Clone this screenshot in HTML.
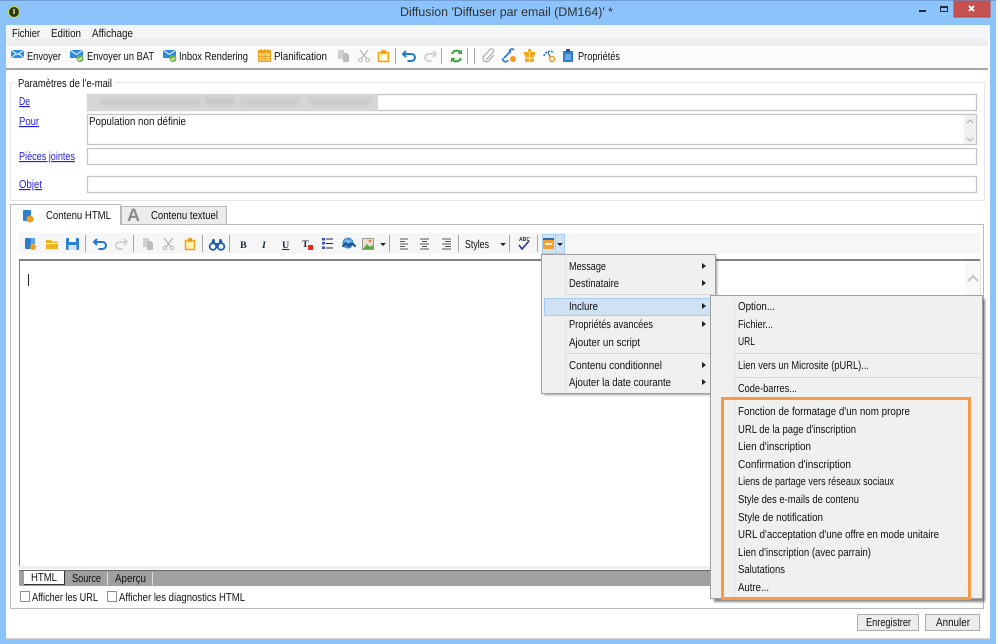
<!DOCTYPE html>
<html lang="fr"><head><meta charset="utf-8"><title>Diffusion</title>
<style>
html,body{margin:0;padding:0;background:#fff;width:1000px;height:644px;overflow:hidden}
svg{display:block}
text{font-family:"Liberation Sans",sans-serif;font-size:11.5px;fill:#111;text-rendering:geometricPrecision}
</style></head><body>
<svg width="1000" height="644" viewBox="0 0 1000 644" xmlns="http://www.w3.org/2000/svg">
<defs>
<filter id="b" x="-5%" y="-50%" width="110%" height="200%" color-interpolation-filters="sRGB"><feGaussianBlur stdDeviation="2"/></filter>
<filter id="s" x="-5%" y="-5%" width="110%" height="110%" color-interpolation-filters="sRGB"><feGaussianBlur stdDeviation="1"/></filter>
<filter id="soft" filterUnits="userSpaceOnUse" x="0" y="0" width="1000" height="644" color-interpolation-filters="sRGB"><feGaussianBlur stdDeviation="0.35"/></filter>
</defs>
<g filter="url(#soft)">
<rect x="0" y="0" width="1000" height="644" fill="#fff"/>
<!-- window -->
<rect x="0" y="0" width="996" height="644" fill="#8cc3fa"/>
<rect x="0" y="0" width="996" height="1" fill="#6f9fd6"/>
<rect x="6" y="25" width="984" height="614" fill="#fff"/>
<rect x="6" y="25" width="984" height="14" fill="#f4f5f7"/>
<rect x="6" y="39" width="982" height="7" fill="#eeeeee"/>
<rect x="6" y="46" width="982" height="22" fill="#fbfbfb"/>
<rect x="6" y="68" width="982" height="2" fill="#a6a6a6"/>
<rect x="6" y="638" width="984" height="1" fill="#d8d8d8"/>
<!-- title -->
<circle cx="14" cy="12" r="5.500" fill="#2f3a1c" stroke="#c8d84a" stroke-width="1"/>
<rect x="13" y="9" width="2" height="5" fill="#b5b56a"/>
<text x="400" y="16" textLength="213" lengthAdjust="spacingAndGlyphs" style="font-size:12.5px;fill:#333">Diffusion 'Diffuser par email (DM164)' *</text>
<rect x="919" y="10" width="7" height="2" fill="#1f2a3a"/>
<rect x="940.500" y="6.500" width="7" height="5" fill="none" stroke="#1f2a3a"/>
<rect x="940" y="6" width="8" height="2" fill="#1f2a3a"/>
<rect x="954" y="1" width="36" height="16" fill="#c75050" stroke="#b04a4a" stroke-width="1"/>
<path d="M969 6l5 5M974 6l-5 5" stroke="#fff" stroke-width="1.800"/>
<!-- menu -->
<text x="12" y="37" textLength="28" lengthAdjust="spacingAndGlyphs">Fichier</text>
<text x="51" y="37" textLength="30" lengthAdjust="spacingAndGlyphs">Edition</text>
<text x="92" y="37" textLength="41" lengthAdjust="spacingAndGlyphs">Affichage</text>
<!-- top toolbar -->
<g>
<rect x="11" y="50" width="13" height="8" fill="#2f8ae0"/><path d="M11 50l6.500 4.500L24 50M11 58l5-4M24 58l-5-4" stroke="#fff" fill="none"/>
<text x="27" y="60" textLength="34" lengthAdjust="spacingAndGlyphs">Envoyer</text>
<rect x="70" y="50" width="13" height="8" fill="#2f8ae0"/><path d="M70 50l6.500 4.500L83 50" stroke="#fff" fill="none"/><circle cx="80" cy="58.500" r="3.500" fill="#6cb33f"/><path d="M78 58.500l1.500 1.500 2.500-2.500" stroke="#fff" fill="none"/>
<text x="87" y="60" textLength="67" lengthAdjust="spacingAndGlyphs">Envoyer un BAT</text>
<rect x="163" y="50" width="13" height="8" fill="#2f8ae0"/><path d="M163 50l6.500 4.500L176 50" stroke="#fff" fill="none"/><circle cx="173" cy="58.500" r="3.500" fill="#6cb33f"/><path d="M171 58.500l1.500 1.500 2.500-2.500" stroke="#fff" fill="none"/>
<text x="179" y="60" textLength="69" lengthAdjust="spacingAndGlyphs">Inbox Rendering</text>
<rect x="258.500" y="51.500" width="12" height="10" fill="#fbd36b" stroke="#eba01e"/><rect x="258" y="50" width="13" height="3" fill="#eba01e"/><path d="M261 49v3M264.500 49v3M268 49v3M262 54v7M265.500 54v7M259 56.500h11M259 59h11" stroke="#eba01e" stroke-width=".8"/>
<text x="274" y="60" textLength="53" lengthAdjust="spacingAndGlyphs">Planification</text>
<path d="M338 50h6v9h-6z" fill="#d0d0d0"/><path d="M343 53h4l2 2v7h-6z" fill="#bdbdbd"/>
<path d="M360 50l7 9M368 50l-7 9" stroke="#b5b5b5" stroke-width="1.300"/><circle cx="360.500" cy="60" r="1.800" fill="none" stroke="#b5b5b5"/><circle cx="367.500" cy="60" r="1.800" fill="none" stroke="#b5b5b5"/>
<rect x="378.500" y="52.500" width="10" height="9" fill="#fff0b0" stroke="#eba41e" stroke-width="1.500"/><rect x="381" y="50" width="5" height="4" fill="#eba41e"/><rect x="382" y="56" width="4" height="4" fill="#fff"/>
<rect x="395" y="48" width="1" height="16" fill="#a8a8a8"/>
<path d="M406 51l-3 3 3 3M403.500 54h8a3.500 3.500 0 0 1 0 7h-4" fill="none" stroke="#1f78d1" stroke-width="2"/>
<path d="M433 51l3 3-3 3M435.500 54h-7a3.500 3.500 0 0 0 0 7h3" fill="none" stroke="#d2d2d2" stroke-width="2"/>
<rect x="441" y="48" width="1" height="16" fill="#a8a8a8"/>
<path d="M452 54a5 5 0 0 1 9-1M461 58a5 5 0 0 1-9 1" fill="none" stroke="#3aa535" stroke-width="2"/><path d="M462 49.500v4.500h-4.500zM451 62.500V58h4.500z" fill="#3aa535"/>
<rect x="467" y="48" width="1" height="16" fill="#a8a8a8"/><rect x="474" y="48" width="1" height="16" fill="#a8a8a8"/>
<path d="M486 60l7-7.500a2 2 0 0 0-3-3l-6.500 7a3.400 3.400 0 0 0 5 4.500l5.500-6" fill="none" stroke="#a8a8a8" stroke-width="1.200"/>
<path d="M504 58l7-7M503 58a2.500 2.500 0 0 0 5 2M510 53a2.500 2.500 0 0 1 4-3" fill="none" stroke="#1f78d1" stroke-width="1.600"/><circle cx="513" cy="59" r="3" fill="#f09a1e"/>
<rect x="525" y="54" width="9" height="8" fill="#f0a81e"/><rect x="524" y="52" width="11" height="3" fill="#f0a81e"/><circle cx="529.500" cy="50.500" r="1.600" fill="#f0a81e"/><path d="M529.500 52v10M525 58h9" stroke="#fff" stroke-width=".8"/>
<path d="M544 56a6 6 0 0 1 10-3" fill="none" stroke="#1f78d1" stroke-width="1.500" stroke-dasharray="2 1"/><path d="M548 52l2 5" stroke="#1f4f88"/><circle cx="552" cy="59" r="2.500" fill="#fff" stroke="#f09a1e" stroke-width="1.500"/>
<rect x="563" y="51" width="10" height="11" fill="#2b7fd0"/><rect x="566" y="49" width="4" height="3" fill="#1e5c9c"/><path d="M565 55h6M565 57h6M565 59h6" stroke="#cfe4fa" stroke-width=".8"/>
<text x="578" y="60" textLength="42" lengthAdjust="spacingAndGlyphs">Propriétés</text>
</g>
<!-- group box -->
<rect x="10.500" y="82.500" width="974" height="118" fill="none" stroke="#e6e6e6"/>
<rect x="15" y="78" width="100" height="10" fill="#fff"/>
<text x="18" y="87" textLength="94" lengthAdjust="spacingAndGlyphs">Paramètres de l'e-mail</text>
<text x="19" y="105" textLength="11" lengthAdjust="spacingAndGlyphs" style="fill:#2222dd" text-decoration="underline">De</text>
<text x="19" y="125" textLength="20" lengthAdjust="spacingAndGlyphs" style="fill:#2222dd" text-decoration="underline">Pour</text>
<text x="19" y="160" textLength="56" lengthAdjust="spacingAndGlyphs" style="fill:#2222dd" text-decoration="underline">Pièces jointes</text>
<text x="19" y="188" textLength="23" lengthAdjust="spacingAndGlyphs" style="fill:#2222dd" text-decoration="underline">Objet</text>
<rect x="87.500" y="94.500" width="889" height="16" fill="#fff" stroke="#c4c4c4" stroke-width="1.300"/>
<rect x="87" y="94" width="291" height="17" fill="#d6d6d6"/>
<rect x="100" y="99" width="100" height="6" fill="#c8c8c8" filter="url(#b)"/><rect x="205" y="98" width="30" height="7" fill="#c6c6c6" filter="url(#b)"/><rect x="240" y="99" width="60" height="6" fill="#cacaca" filter="url(#b)"/><rect x="310" y="99" width="60" height="6" fill="#c8c8c8" filter="url(#b)"/>
<rect x="87.500" y="114.500" width="889" height="30" fill="#fff" stroke="#c4c4c4" stroke-width="1.300"/>
<rect x="964" y="115" width="12" height="29" fill="#f0f0f0"/>
<path d="M967 123l3-3 3 3M967 138l3 3 3-3" fill="none" stroke="#b4b4b4" stroke-width="1.200"/>
<text x="89" y="125" textLength="97" lengthAdjust="spacingAndGlyphs">Population non définie</text>
<rect x="87.500" y="148.500" width="889" height="16" fill="#fff" stroke="#c4c4c4" stroke-width="1.300"/>
<rect x="87.500" y="176.500" width="889" height="16" fill="#fff" stroke="#c4c4c4" stroke-width="1.300"/>
<!-- tab pane -->
<rect x="10.500" y="224.500" width="973" height="384" fill="#fff" stroke="#b8b8b8"/>
<path d="M121.500 224V206.500H226.500V224" fill="#ececec" stroke="#b8b8b8"/>
<path d="M10.500 225V204.500H120.500V225" fill="#fff" stroke="#b8b8b8"/>
<rect x="11" y="224" width="109" height="2" fill="#fff"/>
<rect x="23" y="210" width="8" height="11" rx="1" fill="#2b7fd0"/><circle cx="30" cy="219" r="3.500" fill="#f09a1e"/>
<text x="46" y="219" textLength="65" lengthAdjust="spacingAndGlyphs">Contenu HTML</text>
<text x="127" y="221" style="font-size:18px;font-weight:bold;fill:#8c8c8c">A</text>
<text x="151" y="219" textLength="67" lengthAdjust="spacingAndGlyphs">Contenu textuel</text>
<!-- editor toolbar -->
<rect x="19" y="233" width="961" height="21" fill="#f6f6f6"/>
<rect x="25" y="238" width="6" height="11" rx="1" fill="#2b7fd0"/><path d="M31 238h4v6h-4z" fill="#5aa5e8"/><circle cx="33" cy="247" r="3" fill="#f09a1e"/>
<path d="M46 240h5l1 1.500h6V249H46z" fill="#f0b41e"/><rect x="46" y="243" width="12" height="1" fill="#fff"/>
<rect x="66" y="238" width="13" height="12" rx="1" fill="#2b7fd0"/><rect x="69" y="238" width="7" height="4" fill="#fff"/><rect x="68.500" y="245" width="8" height="5" fill="#cfe4fa"/>
<rect x="85" y="235" width="1" height="17" fill="#a8a8a8"/>
<path d="M97 239l-3 3 3 3M94.500 242h8a3 3 0 0 1 0 7h-4" fill="none" stroke="#1f78d1" stroke-width="2"/>
<path d="M124 239l3 3-3 3M126.500 242h-7a3 3 0 0 0 0 7h3" fill="none" stroke="#d2d2d2" stroke-width="2"/>
<rect x="133" y="235" width="1" height="17" fill="#a8a8a8"/>
<path d="M143 238h6v9h-6z" fill="#d0d0d0"/><path d="M147 241h4l2 2v7h-6z" fill="#bdbdbd"/>
<path d="M164 238l7 9M173 238l-7 9" stroke="#b5b5b5" stroke-width="1.300"/><circle cx="165" cy="248" r="1.800" fill="none" stroke="#b5b5b5"/><circle cx="172" cy="248" r="1.800" fill="none" stroke="#b5b5b5"/>
<rect x="185.500" y="240.500" width="9" height="9" fill="#fff0b0" stroke="#eba41e" stroke-width="1.500"/><rect x="188" y="238" width="4" height="4" fill="#eba41e"/>
<rect x="202" y="235" width="1" height="17" fill="#a8a8a8"/>
<circle cx="213" cy="246.500" r="3.300" fill="#fff" stroke="#1f5ea8" stroke-width="1.800"/><circle cx="221" cy="246.500" r="3.300" fill="#fff" stroke="#1f5ea8" stroke-width="1.800"/><path d="M211 244l1.500-5h2l1 5M223 244l-1.500-5h-2l-1 5" fill="#1f5ea8"/><rect x="215" y="243" width="4" height="3" fill="#1f5ea8"/>
<rect x="229" y="235" width="1" height="17" fill="#a8a8a8"/>
<text x="240" y="248" style="font-size:10px;font-weight:bold;font-family:'Liberation Serif',serif;fill:#1c2a44">B</text>
<text x="262" y="248" style="font-size:10px;font-weight:bold;font-style:italic;font-family:'Liberation Serif',serif;fill:#1c2a44">I</text>
<text x="282" y="248" style="font-size:10px;font-weight:bold;font-family:'Liberation Serif',serif;fill:#1c2a44" text-decoration="underline">U</text>
<text x="302" y="247" style="font-size:10px;font-weight:bold;font-family:'Liberation Serif',serif;fill:#1c2a44">T</text><rect x="308" y="245" width="5" height="5" fill="#e8281e"/>
<path d="M326 239h7M326 243.500h7M326 248h7" stroke="#1c2a44" stroke-width="1"/><path d="M322 238h3v2.500h-3zM322 242h3v2.500h-3zM322 246.500h3v2.500h-3z" fill="#3a4fb8"/>
<circle cx="348" cy="243" r="5.500" fill="#3f8ad8"/><path d="M344 241h8M346 238l2 5 3-4" stroke="#9cc8f0" fill="none"/><path d="M343 247a3 3 0 0 1 6 0M349 247a3 3 0 0 1 6 0" fill="none" stroke="#1f4f88" stroke-width="2"/>
<rect x="362.500" y="238.500" width="11" height="11" fill="#eadfce" stroke="#a09a8e"/><path d="M363 249l4-5 3 3 3-2v4z" fill="#58a848"/><circle cx="370" cy="241" r="1.300" fill="#e87a30"/>
<path d="M380 243h6l-3 3z" fill="#222"/>
<rect x="389" y="235" width="1" height="17" fill="#a8a8a8"/>
<path d="M400 239h8M400 241.500h5M400 244h8M400 246.500h5M400 249h8" stroke="#555" stroke-width="1"/>
<path d="M420 239h9M422 241.500h5M420 244h9M422 246.500h5M420 249h9" stroke="#555" stroke-width="1"/>
<path d="M442 239h9M445 241.500h6M442 244h9M445 246.500h6M442 249h9" stroke="#555" stroke-width="1"/>
<rect x="458" y="235" width="1" height="17" fill="#a8a8a8"/>
<text x="465" y="248" textLength="24" lengthAdjust="spacingAndGlyphs">Styles</text>
<path d="M500 243h6l-3 3z" fill="#222"/>
<rect x="509" y="235" width="1" height="17" fill="#a8a8a8"/>
<text x="519" y="241" textLength="11" lengthAdjust="spacingAndGlyphs" style="font-size:6px;font-weight:bold;fill:#333">ABC</text>
<path d="M519 245l3 4 7-8" fill="none" stroke="#25309c" stroke-width="1.500"/>
<rect x="537" y="235" width="1" height="17" fill="#a8a8a8"/>
<rect x="542.500" y="234.500" width="13" height="19" fill="#cfe2f4" stroke="#a4cdf2"/><rect x="555.500" y="234.500" width="9" height="19" fill="#cfe2f4" stroke="#a4cdf2"/>
<rect x="543" y="238" width="11" height="11" fill="#f0a030"/><rect x="543" y="238" width="11" height="2" fill="#2b6cb0"/><rect x="545" y="243" width="7" height="2" fill="#fff3c8"/>
<path d="M557 243h6l-3 3z" fill="#222"/>
<!-- editor -->
<rect x="19" y="259" width="961" height="307" fill="#fff"/>
<rect x="19" y="259" width="961" height="2" fill="#808080"/>
<rect x="19" y="259" width="1" height="307" fill="#808080"/>
<rect x="980" y="259" width="1" height="40" fill="#e4e4e4"/>
<rect x="965" y="261" width="15" height="40" fill="#f8f8f8"/>
<path d="M968 281l5-5 5 5" fill="none" stroke="#c4c4c4" stroke-width="2"/>
<rect x="28" y="274" width="1" height="12" fill="#222"/>
<rect x="19" y="566" width="700" height="3" fill="#eeeeee"/>
<!-- lower tabs -->
<rect x="19" y="570" width="700" height="16" fill="#a0a0a0"/>
<rect x="19" y="570" width="700" height="1" fill="#666"/>
<rect x="24" y="571" width="40" height="14" fill="#fff"/><rect x="24" y="584" width="40" height="1" fill="#333"/><rect x="64" y="571" width="1" height="14" fill="#333"/>
<rect x="107" y="572" width="1" height="13" fill="#ddd"/><rect x="152" y="572" width="1" height="13" fill="#ddd"/>
<text x="31" y="581" textLength="26" lengthAdjust="spacingAndGlyphs">HTML</text>
<text x="72" y="582" textLength="29" lengthAdjust="spacingAndGlyphs">Source</text>
<text x="115" y="582" textLength="31" lengthAdjust="spacingAndGlyphs">Aperçu</text>
<rect x="20.500" y="591.500" width="9" height="10" fill="#fff" stroke="#8e8f8f"/>
<text x="32" y="601" textLength="66" lengthAdjust="spacingAndGlyphs">Afficher les URL</text>
<rect x="107.500" y="591.500" width="9" height="10" fill="#fff" stroke="#8e8f8f"/>
<text x="119" y="601" textLength="126" lengthAdjust="spacingAndGlyphs">Afficher les diagnostics HTML</text>
<!-- buttons -->
<rect x="857.500" y="614.500" width="61" height="16" fill="#ececec" stroke="#acacac"/>
<text x="866" y="626" textLength="45" lengthAdjust="spacingAndGlyphs">Enregistrer</text>
<rect x="925.500" y="614.500" width="54" height="16" fill="#ececec" stroke="#acacac"/>
<text x="936" y="626" textLength="34" lengthAdjust="spacingAndGlyphs">Annuler</text>
<!-- menu 1 -->
<rect x="544" y="257" width="173" height="138" fill="#555" opacity=".6" filter="url(#s)"/>
<rect x="541.500" y="254.500" width="174" height="139" fill="#f0f0f0" stroke="#a0a0a0"/>
<rect x="565" y="256" width="1" height="136" fill="#e2e2e2"/>
<rect x="566" y="294" width="148" height="1" fill="#d8d8d8"/>
<rect x="566" y="353" width="148" height="1" fill="#d8d8d8"/>
<rect x="544.500" y="298.500" width="166" height="17" fill="#cfe2f4" stroke="#a8cdf0"/>
<text x="569" y="270" textLength="37" lengthAdjust="spacingAndGlyphs">Message</text>
<text x="569" y="287" textLength="50" lengthAdjust="spacingAndGlyphs">Destinataire</text>
<text x="569" y="310" textLength="29" lengthAdjust="spacingAndGlyphs">Inclure</text>
<text x="569" y="328" textLength="84" lengthAdjust="spacingAndGlyphs">Propriétés avancées</text>
<text x="569" y="346" textLength="71" lengthAdjust="spacingAndGlyphs">Ajouter un script</text>
<text x="569" y="369" textLength="93" lengthAdjust="spacingAndGlyphs">Contenu conditionnel</text>
<text x="569" y="386" textLength="102" lengthAdjust="spacingAndGlyphs">Ajouter la date courante</text>
<path d="M702 263l4 3-4 3zM702 280l4 3-4 3zM702 303l4 3-4 3zM702 321l4 3-4 3zM702 362l4 3-4 3zM702 379l4 3-4 3z" fill="#222"/>
<!-- submenu -->
<rect x="714" y="299" width="271" height="303" fill="#555" opacity=".7" filter="url(#s)"/>
<rect x="710.500" y="295.500" width="272" height="303" fill="#f0f0f0" stroke="#a0a0a0"/>
<rect x="734" y="297" width="1" height="300" fill="#e2e2e2"/>
<rect x="735" y="353" width="246" height="1" fill="#d8d8d8"/>
<rect x="735" y="377" width="246" height="1" fill="#d8d8d8"/>
<text x="738" y="310" textLength="37" lengthAdjust="spacingAndGlyphs">Option...</text>
<text x="738" y="328" textLength="35" lengthAdjust="spacingAndGlyphs">Fichier...</text>
<text x="738" y="345" textLength="17" lengthAdjust="spacingAndGlyphs">URL</text>
<text x="738" y="369" textLength="131" lengthAdjust="spacingAndGlyphs">Lien vers un Microsite (pURL)...</text>
<text x="738" y="392" textLength="59" lengthAdjust="spacingAndGlyphs">Code-barres...</text>
<text x="738" y="415" textLength="172" lengthAdjust="spacingAndGlyphs">Fonction de formatage d'un nom propre</text>
<text x="738" y="433" textLength="118" lengthAdjust="spacingAndGlyphs">URL de la page d'inscription</text>
<text x="738" y="450" textLength="73" lengthAdjust="spacingAndGlyphs">Lien d'inscription</text>
<text x="738" y="468" textLength="113" lengthAdjust="spacingAndGlyphs">Confirmation d'inscription</text>
<text x="738" y="485" textLength="156" lengthAdjust="spacingAndGlyphs">Liens de partage vers réseaux sociaux</text>
<text x="738" y="503" textLength="121" lengthAdjust="spacingAndGlyphs">Style des e-mails de contenu</text>
<text x="738" y="521" textLength="85" lengthAdjust="spacingAndGlyphs">Style de notification</text>
<text x="738" y="538" textLength="201" lengthAdjust="spacingAndGlyphs">URL d'acceptation d'une offre en mode unitaire</text>
<text x="738" y="556" textLength="133" lengthAdjust="spacingAndGlyphs">Lien d'inscription (avec parrain)</text>
<text x="738" y="573" textLength="47" lengthAdjust="spacingAndGlyphs">Salutations</text>
<text x="738" y="591" textLength="31" lengthAdjust="spacingAndGlyphs">Autre...</text>
<!-- orange highlight -->
<rect x="722.500" y="398.500" width="247" height="200" fill="none" stroke="#f79a46" stroke-width="3"/>
</g>
</svg>
</body></html>
